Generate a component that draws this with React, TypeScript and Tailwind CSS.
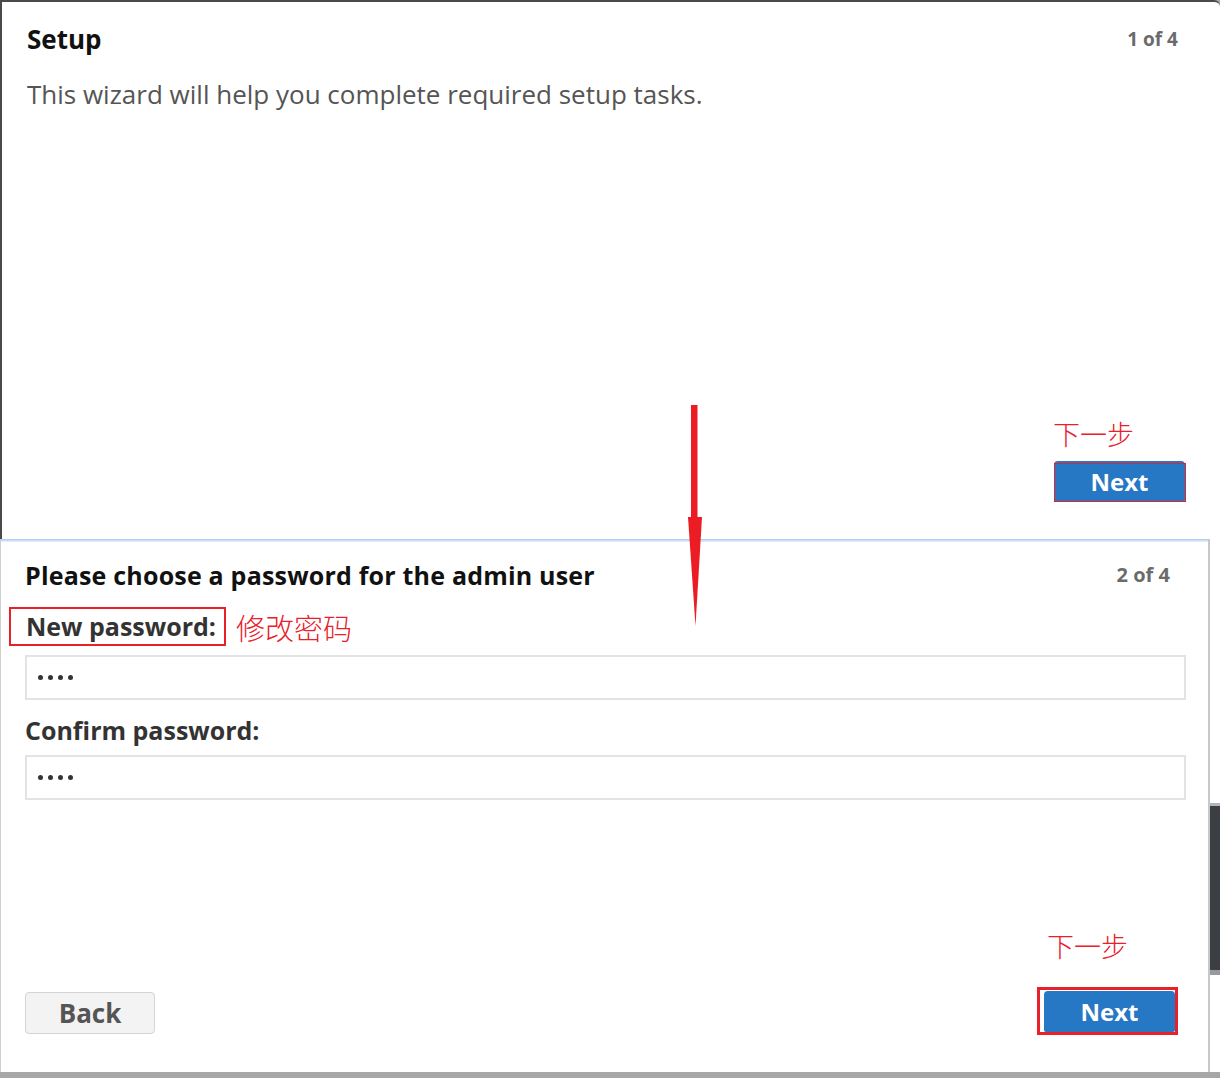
import React from "react";

const latin = { fontFamily: '"Open Sans", "Noto Sans", sans-serif' };
const cjk = { fontFamily: '"Noto Sans CJK SC", sans-serif' };

function Arrow() {
  return (
    <svg className="absolute left-[686px] top-[404px]" width="18" height="224" viewBox="0 0 18 224">
      <rect x="5" y="1" width="6.5" height="114" fill="#ec1c24" />
      <polygon points="2,113 16,113 9.5,222" fill="#ec1c24" />
    </svg>
  );
}

function NextBtn() {
  return (
    <div className="flex h-[41px] w-[131px] items-center justify-center rounded-t-[4px] rounded-b-[2px] bg-[#2677c4] text-[24px] font-bold leading-none text-white">
      Next
    </div>
  );
}

function Dots() {
  return (
    <div className="flex items-center gap-[5px] pl-[11px]">
      <span className="h-[5px] w-[5px] rounded-full bg-[#333]" />
      <span className="h-[5px] w-[5px] rounded-full bg-[#333]" />
      <span className="h-[5px] w-[5px] rounded-full bg-[#333]" />
      <span className="h-[5px] w-[5px] rounded-full bg-[#333]" />
    </div>
  );
}

export default function App() {
  return (
    <div className="relative h-[1078px] w-[1220px] overflow-hidden bg-[#a7a7a7]" style={latin}>
      {/* top panel */}
      <div className="flex h-[539px] w-[1220px] flex-col rounded-tr-[6px] border-l-2 border-t-2 border-[#4a4a4a] bg-white">
        <div className="flex items-start justify-between pl-[25px] pr-[42px] pt-[20px]">
          <div className="text-[26px] font-bold leading-[34px] text-[#111]">Setup</div>
          <div className="pt-[5px] text-[19px] font-bold leading-[24px] text-[#6b6b6b]">1 of 4</div>
        </div>
        <div className="pl-[25px] pt-[22px] text-[26px] leading-[32px] text-[#555]">
          This wizard will help you complete required setup tasks.
        </div>
        <div className="mt-auto flex flex-col items-end pb-[37px] pr-[35px]">
          <div className="mr-[1px] w-[131px] text-[27px] font-light leading-[34px] text-[#e8202a]" style={cjk}>
            下一步
          </div>
          <div className="relative mt-[10px]">
            <NextBtn />
            <div className="pointer-events-none absolute left-0 right-[-1px] top-[2px] bottom-0 border border-[#e8202a]" />
          </div>
        </div>
      </div>

      {/* bottom row */}
      <div className="flex h-[539px]">
        <div className="flex h-[533px] w-[1210px] flex-col border-l border-r-2 border-l-[#cfcfcf] border-r-[#c8c8c8] bg-white">
          <div className="h-[3px] bg-gradient-to-b from-[#a8c7ef] to-[#eef4fc]" />
          <div className="flex items-start justify-between pl-[24px] pr-[38px] pt-[16px]">
            <div className="text-[25px] font-bold leading-[34px] tracking-[0.2px] text-[#111]">
              Please choose a password for the admin user
            </div>
            <div className="pt-[5px] text-[20px] font-bold leading-[24px] text-[#6b6b6b]">2 of 4</div>
          </div>
          <div className="flex items-center pl-[8px] pt-[15px]">
            <div className="flex h-[39px] items-center border-2 border-[#e8202a] pl-[15px] pr-[8px] text-[25px] font-bold text-[#333]">
              New password:
            </div>
            <div className="pl-[10px] text-[29px] font-light leading-[34px] text-[#e8202a]" style={cjk}>
              修改密码
            </div>
          </div>
          <div className="pl-[24px] pr-[22px] pt-[9px]">
            <div className="flex h-[45px] items-center border-2 border-[#e3e3e3]">
              <Dots />
            </div>
          </div>
          <div className="pl-[24px] pt-[14px] text-[25px] font-bold leading-[32px] text-[#333]">Confirm password:</div>
          <div className="pl-[24px] pr-[22px] pt-[9px]">
            <div className="flex h-[45px] items-center border-2 border-[#e3e3e3]">
              <Dots />
            </div>
          </div>
          <div className="mt-auto flex items-end justify-between pb-[37px] pl-[24px] pr-[30px]">
            <div className="mb-[1px] flex h-[42px] w-[130px] items-center justify-center rounded-[4px] border border-[#d4d4d4] bg-[#f3f3f3] text-[26px] font-bold text-[#555]">
              Back
            </div>
            <div className="flex flex-col items-end">
              <div className="mr-[50px] text-[27px] font-light leading-[34px] text-[#e8202a]" style={cjk}>
                下一步
              </div>
              <div className="mt-[24px] border-[3px] border-[#e8202a] pl-[4px] pt-[1px]">
                <NextBtn />
              </div>
            </div>
          </div>
        </div>
        <div className="flex h-[533px] w-[10px] flex-col bg-white">
          <div className="h-[264px]" />
          <div className="h-[3px] bg-[#b5b5b5]" />
          <div className="h-[164px] bg-[#3b3e42]" />
          <div className="h-[5px] bg-[#9a9a9a]" />
          <div className="flex-1 bg-white" />
        </div>
      </div>

      <Arrow />
    </div>
  );
}
